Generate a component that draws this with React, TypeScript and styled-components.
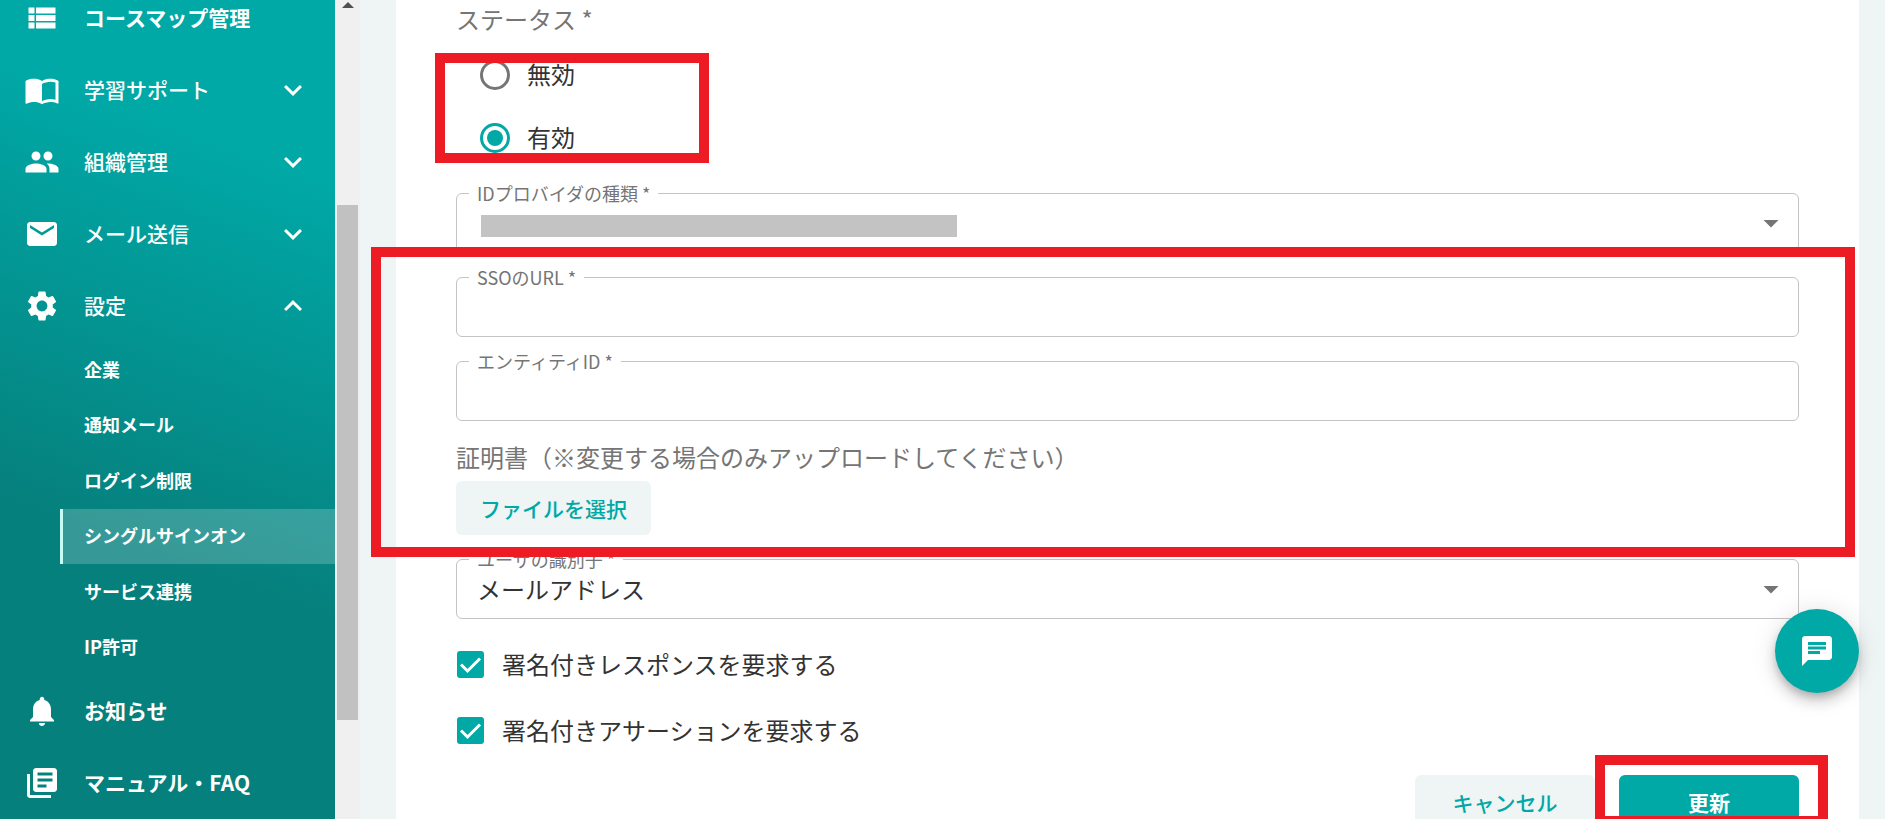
import React from "react";
import styled, { createGlobalStyle, css } from "styled-components";
import {
  MdArrowDropDown,
  MdChat,
  MdEmail,
  MdExpandLess,
  MdExpandMore,
  MdImportContacts,
  MdLibraryBooks,
  MdNotifications,
  MdPeople,
  MdSettings,
  MdViewList,
} from "react-icons/md";

const teal = "#00a8a6";
const mist = "#eff5f5";
const red = "#ed1c24";

const GlobalStyle = createGlobalStyle`
  * { box-sizing: border-box; }
  body {
    margin: 0;
    background: ${mist};
    color: #333;
    font-family: "Noto Sans CJK JP", "Noto Sans", sans-serif;
    font-size: 24px;
    line-height: 36px;
  }
  button, input, select { font: inherit; color: inherit; margin: 0; }
`;

const Page = styled.div`
  display: flex;
  height: 100vh;
  overflow: hidden;
`;

const Sidebar = styled.nav`
  flex: 0 0 335px;
  overflow: hidden;
  color: #fff;
  background: linear-gradient(200deg, ${teal} 20%, #06807d 66%);
`;

const MenuList = styled.ul`
  list-style: none;
  margin: -18px 0 0;
  padding: 0;
`;

const rowStyle = css`
  display: flex;
  align-items: center;
  width: 100%;
  height: 72px;
  padding: 0 24px;
  gap: 24px;
  border: 0;
  background: none;
  color: #fff;
  font-size: 21px;
  text-align: left;
  text-decoration: none;
  svg { flex: none; }
`;

const MenuLink = styled.a`
  ${rowStyle}
  font-weight: 700;
`;

const MenuToggle = styled.button`
  ${rowStyle}
  font-weight: 500;
`;

const MenuText = styled.span`
  flex: 1;
  padding-bottom: 2px;
`;

const SubList = styled.ul`
  display: flex;
  flex-direction: column;
  height: 333px;
  list-style: none;
  margin: 0;
  padding: 0 0 0 60px;
`;

const SubItem = styled.li`
  flex: 1;
  display: flex;
`;

const SubLink = styled.a<{ $active?: boolean }>`
  flex: 1;
  display: flex;
  align-items: center;
  padding: 0 0 2px 21px;
  border-left: 3px solid ${(p) => (p.$active ? "#c5fbf5" : "transparent")};
  background: ${(p) => (p.$active ? "rgba(255, 255, 255, 0.2)" : "none")};
  background-clip: padding-box;
  color: #fff;
  font-size: 18px;
  font-weight: 700;
  text-decoration: none;
`;

const ScrollTrack = styled.div`
  flex: 0 0 25px;
  display: flex;
  flex-direction: column;
  align-items: center;
  padding-top: 2px;
  border-left: 1px solid #f7f9f9;
  background: #f0f0f0;
`;

const ScrollArrow = styled.svg`
  display: block;
  width: 12px;
  height: 6px;
  margin-bottom: 197px;
`;

const ScrollThumb = styled.div`
  width: 21px;
  height: 63%;
  margin-right: 2px;
  background: #c1c1c1;
`;

const Main = styled.main`
  flex: 1;
  min-width: 0;
  padding: 0 26px 0 36px;
`;

const Card = styled.form`
  display: flex;
  flex-direction: column;
  gap: 24px;
  min-height: 100vh;
  padding: 0 60px 24px;
  background: #fff;
`;

const RadioGroup = styled.fieldset`
  border: 0;
  margin: 0;
  padding: 0;
`;

const GroupTitle = styled.legend`
  height: 43px;
  padding: 1px 0 0;
  color: #757575;
`;

const RadioList = styled.div`
  position: relative;
`;

const RadioRow = styled.label`
  display: flex;
  align-items: center;
  gap: 17px;
  height: 63px;
  padding-left: 24px;
`;

const RadioText = styled.span`
  padding-bottom: 2px;
`;

const Radio = styled.input`
  appearance: none;
  display: grid;
  place-items: center;
  width: 30px;
  height: 30px;
  border: 3px solid #757575;
  border-radius: 50%;
  &:checked { border-color: ${teal}; }
  &:checked::before {
    content: "";
    width: 16px;
    height: 16px;
    border-radius: 50%;
    background: ${teal};
  }
`;

const Field = styled.div`
  position: relative;
  height: 60px;
`;

const FieldLabel = styled.label`
  position: absolute;
  top: -12px;
  left: 13px;
  padding: 0 8px;
  background: #fff;
  color: #757575;
  font-size: 18px;
  line-height: 24px;
`;

const controlStyle = css`
  appearance: none;
  display: block;
  width: 100%;
  height: 60px;
  padding: 0 48px 0 20px;
  border: 1px solid #c4c4c4;
  border-radius: 6px;
  background: #fff;
  outline: none;
`;

const TextInput = styled.input`${controlStyle}`;
const Select = styled.select`${controlStyle}`;

const SelectArrow = styled(MdArrowDropDown)`
  position: absolute;
  top: 12px;
  right: 10px;
  color: #757575;
  pointer-events: none;
`;

const Redaction = styled.span`
  position: absolute;
  top: 22px;
  left: 25px;
  width: 476px;
  height: 22px;
  background: #c3c3c3;
`;

const ConnectionSection = styled.section`
  position: relative;
  display: flex;
  flex-direction: column;
  gap: 24px;
`;

const Certificate = styled.div`
  display: flex;
  flex-direction: column;
  align-items: flex-start;
  gap: 12px;
`;

const CertificateTitle = styled.span`
  color: #757575;
  line-height: 24px;
`;

const Button = styled.button<{ $primary?: boolean; $wide?: boolean }>`
  height: 54px;
  min-width: ${(p) => (p.$wide ? "180px" : "0")};
  padding: 0 24px;
  border: 0;
  border-radius: 6px;
  background: ${(p) => (p.$primary ? teal : mist)};
  color: ${(p) => (p.$primary ? "#fff" : teal)};
  font-size: 21px;
  font-weight: ${(p) => (p.$primary ? 700 : 500)};
`;

const CheckList = styled.div`
  display: flex;
  flex-direction: column;
  gap: 24px;
`;

const CheckRow = styled.label`
  display: flex;
  align-items: center;
  gap: 18px;
  height: 42px;
  padding-left: 1px;
`;

const CheckBox = styled.span`
  position: relative;
  display: flex;
  width: 27px;
  height: 27px;
  svg {
    position: absolute;
    inset: 0;
    pointer-events: none;
  }
`;

const Check = styled.input`
  appearance: none;
  width: 27px;
  height: 27px;
  border: 3px solid #757575;
  border-radius: 3px;
  &:checked { border-color: ${teal}; background: ${teal}; }
`;

const Actions = styled.div`
  display: flex;
  justify-content: flex-end;
  gap: 24px;
`;

const SubmitSlot = styled.div`
  position: relative;
`;

const Highlight = styled.div<{ $inset: string; $width?: string }>`
  position: absolute;
  z-index: 1;
  inset: ${(p) => p.$inset};
  width: ${(p) => p.$width ?? "auto"};
  border: 10px solid ${red};
  pointer-events: none;
`;

const ChatButton = styled.button`
  position: fixed;
  z-index: 2;
  right: 26px;
  bottom: 126px;
  display: grid;
  place-items: center;
  width: 84px;
  height: 84px;
  padding: 0;
  border: 0;
  border-radius: 50%;
  background: ${teal};
  color: #fff;
  box-shadow: 0 5px 8px -2px rgba(0, 0, 0, 0.2),
    0 9px 15px rgba(0, 0, 0, 0.14), 0 2px 27px rgba(0, 0, 0, 0.12);
  svg { color: #fff; }
`;

const groups = [
  { label: "学習サポート", Icon: MdImportContacts },
  { label: "組織管理", Icon: MdPeople },
  { label: "メール送信", Icon: MdEmail },
  { label: "設定", Icon: MdSettings, open: true },
];

const settings = [
  "企業",
  "通知メール",
  "ログイン制限",
  "シングルサインオン",
  "サービス連携",
  "IP許可",
];

function CheckItem({ id, children }: { id: string; children: string }) {
  return (
    <CheckRow htmlFor={id}>
      <CheckBox>
        <Check type="checkbox" id={id} defaultChecked />
        <svg viewBox="0 0 27 27" fill="none" stroke="#fff" strokeWidth="3">
          <path d="M4 13.5l6.5 6.5L23 7.5" />
        </svg>
      </CheckBox>
      {children}
    </CheckRow>
  );
}

export default function App() {
  return (
    <>
      <GlobalStyle />
      <Page>
        <Sidebar>
          <MenuList>
            <li>
              <MenuLink href="#course-map">
                <MdViewList size={36} />
                <MenuText>コースマップ管理</MenuText>
              </MenuLink>
            </li>
            {groups.map(({ label, Icon, open }) => (
              <li key={label}>
                <MenuToggle type="button" aria-expanded={!!open}>
                  <Icon size={36} />
                  <MenuText>{label}</MenuText>
                  {open ? <MdExpandLess size={36} /> : <MdExpandMore size={36} />}
                </MenuToggle>
                {open && (
                  <SubList>
                    {settings.map((item) => (
                      <SubItem key={item}>
                        <SubLink href="#settings" $active={item === "シングルサインオン"}>
                          {item}
                        </SubLink>
                      </SubItem>
                    ))}
                  </SubList>
                )}
              </li>
            ))}
            <li>
              <MenuLink href="#news">
                <MdNotifications size={36} />
                <MenuText>お知らせ</MenuText>
              </MenuLink>
            </li>
            <li>
              <MenuLink href="#manual">
                <MdLibraryBooks size={36} />
                <MenuText>マニュアル・FAQ</MenuText>
              </MenuLink>
            </li>
          </MenuList>
        </Sidebar>
        <ScrollTrack aria-hidden="true">
          <ScrollArrow viewBox="0 0 12 6">
            <path d="M0 6L6 0l6 6z" fill="#505050" />
          </ScrollArrow>
          <ScrollThumb />
        </ScrollTrack>
        <Main>
          <Card onSubmit={(e) => e.preventDefault()}>
            <RadioGroup>
              <GroupTitle>ステータス *</GroupTitle>
              <RadioList>
                <RadioRow>
                  <Radio type="radio" name="status" value="off" />
                  <RadioText>無効</RadioText>
                </RadioRow>
                <RadioRow>
                  <Radio type="radio" name="status" value="on" defaultChecked />
                  <RadioText>有効</RadioText>
                </RadioRow>
                <Highlight $inset="10px auto 6px -21px" $width="274px" />
              </RadioList>
            </RadioGroup>

            <Field>
              <Select id="provider" defaultValue="">
                <option value="" />
              </Select>
              <FieldLabel htmlFor="provider">IDプロバイダの種類 *</FieldLabel>
              <Redaction />
              <SelectArrow size={36} />
            </Field>

            <ConnectionSection>
              <Field>
                <TextInput id="sso-url" type="text" />
                <FieldLabel htmlFor="sso-url">SSOのURL *</FieldLabel>
              </Field>
              <Field>
                <TextInput id="entity-id" type="text" />
                <FieldLabel htmlFor="entity-id">エンティティID *</FieldLabel>
              </Field>
              <Certificate>
                <CertificateTitle id="cert-title">
                  証明書（※変更する場合のみアップロードしてください）
                </CertificateTitle>
                <Button type="button" aria-describedby="cert-title">
                  ファイルを選択
                </Button>
              </Certificate>
              <Highlight $inset="-30px -56px -22px -85px" />
            </ConnectionSection>

            <Field>
              <Select id="user-key" defaultValue="mail">
                <option value="mail">メールアドレス</option>
              </Select>
              <FieldLabel htmlFor="user-key">ユーザの識別子 *</FieldLabel>
              <SelectArrow size={36} />
            </Field>

            <CheckList>
              <CheckItem id="signed-response">署名付きレスポンスを要求する</CheckItem>
              <CheckItem id="signed-assertion">署名付きアサーションを要求する</CheckItem>
            </CheckList>

            <Actions>
              <Button type="button" $wide>
                キャンセル
              </Button>
              <SubmitSlot>
                <Button type="submit" $primary $wide>
                  更新
                </Button>
                <Highlight $inset="-20px -29px 3px -24px" />
              </SubmitSlot>
            </Actions>
          </Card>
        </Main>
      </Page>
      <ChatButton type="button" aria-label="チャット">
        <MdChat size={36} />
      </ChatButton>
    </>
  );
}
